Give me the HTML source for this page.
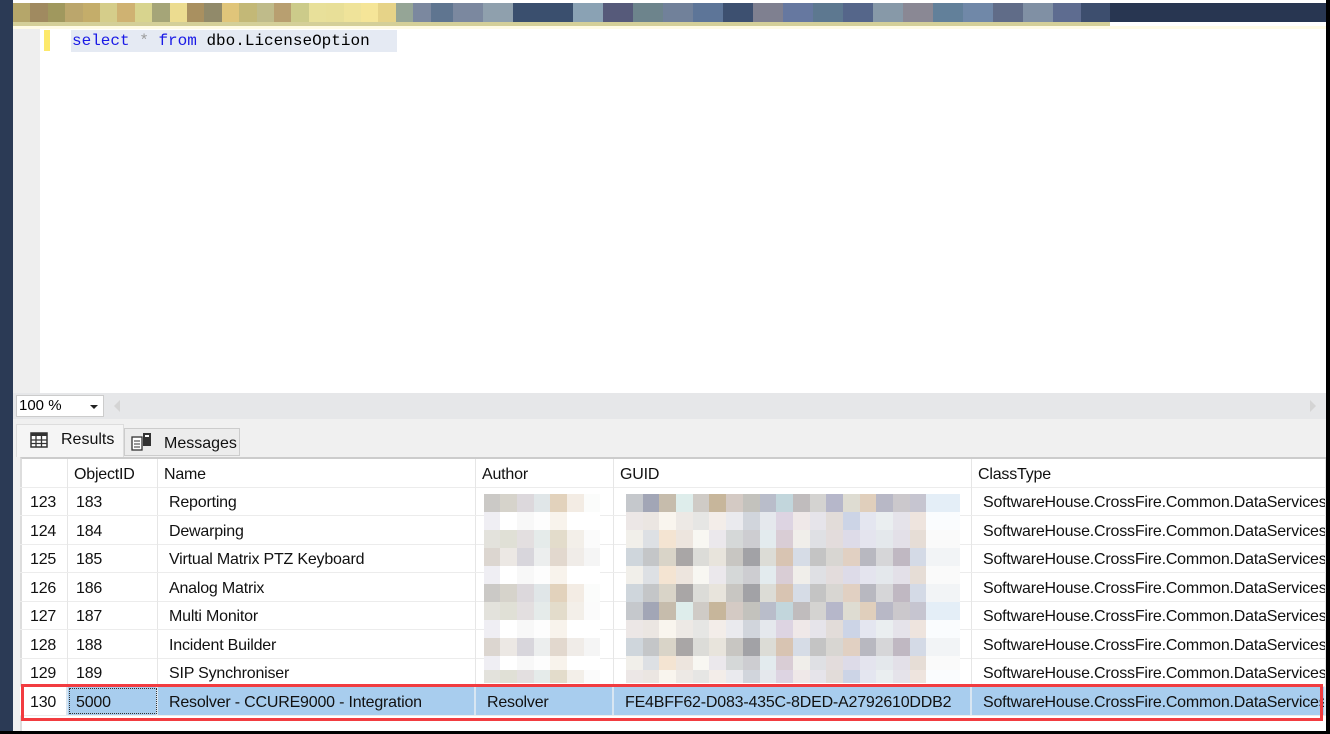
<!DOCTYPE html>
<html><head><meta charset="utf-8"><style>
*{margin:0;padding:0;box-sizing:border-box}
body{width:1330px;height:734px;overflow:hidden;background:#000;position:relative;font-family:"Liberation Sans",sans-serif}
#frame{position:absolute;left:0;top:0;width:1326px;height:731px;background:#fff}
#lbar{position:absolute;left:0;top:0;width:13px;height:731px;background:#2b3a55}
#strip{position:absolute;left:13px;top:3px;width:1313px;height:19px;background:linear-gradient(90deg,#b5a66a 0 17px,#a08a60 17px 35px,#a0985e 35px 52px,#bba66c 52px 70px,#c4ad6a 70px 87px,#d5cd8a 87px 104px,#cfb272 104px 122px,#d8d48e 122px 139px,#a5a578 139px 157px,#ecdc90 157px 174px,#a99060 174px 191px,#918a6a 191px 209px,#e0c57a 209px 226px,#c3b877 226px 244px,#bfbb8a 244px 261px,#b89f70 261px 278px,#cccb8a 278px 296px,#e8e09a 296px 313px,#e8df98 313px 331px,#efe39a 331px 348px,#f5e598 348px 365px,#e6d388 365px 383px,#95a596 383px 400px,#7b889f 400px 418px,#5f7590 418px 440px,#7b889f 440px 470px,#8fa0ad 470px 500px,#3a4f6e 500px 560px,#8aa2b4 560px 590px,#565a7a 590px 620px,#6d848c 620px 650px,#71819a 650px 680px,#5d7598 680px 710px,#3d5070 710px 740px,#7f8090 740px 770px,#6678a0 770px 800px,#5d7890 800px 830px,#55668a 830px 860px,#8799a8 860px 890px,#8a8894 890px 920px,#62809a 920px 950px,#7088a8 950px 980px,#606c88 980px 1010px,#8090a4 1010px 1040px,#5e6c90 1040px 1068px,#3d4e6e 1068px 1097px,#283651 1097px)}
#under{position:absolute;left:13px;top:22px;width:1097px;height:4px;background:#d4cf98}
#under2{position:absolute;left:13px;top:26px;width:1313px;height:3px;background:#fffbe6}
#gut{position:absolute;left:13px;top:29px;width:27px;height:364px;background:#eeeeee}
#ymark{position:absolute;left:44px;top:30px;width:6px;height:21px;background:#fde96b}
#code{position:absolute;left:71px;top:30px;height:22px;padding:0 1px;background:#e5eaf3;font:16px "Liberation Mono",monospace;line-height:22px;color:#000;width:326px}
.kw{color:#1a1ae6}.gr{color:#999}
#zbar{position:absolute;left:13px;top:393px;width:1313px;height:26px;background:#e6e7e9}
#combo{position:absolute;left:16px;top:395px;width:88px;height:22px;background:#fff;border:1px solid #ccc;font-size:15px;line-height:20px;padding-left:2px}
#combo:after{content:"";position:absolute;right:5px;top:9px;border:4px solid transparent;border-top:4px solid #222}
#rarea{position:absolute;left:13px;top:419px;width:1313px;height:312px;background:#f0f0f0}
.tab{position:absolute;font-size:16px;color:#111}
#t1{left:16px;width:108px;background:#f5f5f5;border:1px solid #ddd;border-bottom:none;top:424px;height:33px;line-height:30px;padding-left:44px}
#t2{left:124px;width:116px;background:#ececec;border:1px solid #ccc;top:428px;height:28px;line-height:30px;padding-left:39px}
#grid{position:absolute;left:20px;top:457px;width:1306px;height:274px;background:#fff;border-top:2px solid #ccc;border-left:2px solid #ddd}
.row{position:absolute;left:20px;height:29px;width:1306px;border-bottom:1px solid #ececec;font-size:16px;color:#111}
.c{position:absolute;top:0;height:100%;line-height:31px;border-right:1px solid #e6e6e6;white-space:nowrap;overflow:hidden;padding-left:11px;letter-spacing:-0.2px}
.c0{left:0;width:48px;padding-left:10px}.c1{left:48px;width:90px;padding-left:8px}.c2{left:138px;width:318px}.c3{left:456px;width:138px}.c4{left:594px;width:358px}.c5{left:952px;width:354px}
.hd .c{padding-left:6px}
.sel .c{background:#a8cdee;border-right:2px solid #d8e6f2}
.sel .c0{background:#fff}
.sel .c1{outline:1px dotted #333;outline-offset:-2px}
#red{position:absolute;left:21px;top:684px;width:1302px;height:37px;border:3px solid #f23c40}
.pa{position:absolute;left:484px;width:116px;height:19px}
.pg{position:absolute;left:626px;width:334px;height:19px}
.pA1{background:linear-gradient(90deg,#cbc9c6 0 16px,#d6d3cb 16px 33px,#dcd8dc 33px 50px,#e0e6e8 50px 66px,#e2d2bc 66px 83px,#f3ece4 83px 100px,#fbfcfb 100px)}
.pA2{background:linear-gradient(90deg,#efeef3 0 16px,#fff 16px 33px,#f8f8f8 33px 50px,#fdfdfd 50px 66px,#f8f3ec 66px 83px,#fff 83px)}
.pA3{background:linear-gradient(90deg,#e3e2dc 0 16px,#e0e0d6 16px 33px,#e3dfe0 33px 50px,#e5ebea 50px 66px,#e3dccb 66px 83px,#f3efe9 83px 100px,#fbfbfb 100px)}
.pA4{background:linear-gradient(90deg,#dcd6d0 0 16px,#ece8e4 16px 33px,#d8d6dc 33px 50px,#eceeee 50px 66px,#e2d8ce 66px 83px,#f0ece8 83px 100px,#f5f5f5 100px)}
.pG1{background:linear-gradient(90deg,#c5c8cc 0 17px,#a2a6b6 17px 33px,#c6bcac 33px 50px,#deedeb 50px 67px,#cfcbc6 67px 83px,#c7b69b 83px 100px,#d4cac4 100px 117px,#c3c2bd 117px 134px,#b9bdca 134px 150px,#c2d6dc 150px 167px,#c0bcbd 167px 184px,#d4d3d1 184px 200px,#b6b7ca 200px 217px,#dedcd2 217px 234px,#e0cfbc 234px 250px,#b8b8c6 250px 267px,#cbc8cc 267px 284px,#c6c5d0 284px 300px,#e4eef7 300px)}
.pG2{background:linear-gradient(90deg,#ece7e6 0 17px,#ebe6e2 17px 33px,#f9f5ee 33px 50px,#ede9e5 50px 67px,#e6e6e4 67px 83px,#f3ede9 83px 100px,#eaeaee 100px 117px,#d1d5dc 117px 134px,#e5e8ed 134px 150px,#ddd4e2 150px 167px,#efe8e8 167px 184px,#e6e4ea 184px 200px,#e2dcd9 200px 217px,#ccd4e6 217px 234px,#e4e6f0 234px 250px,#eaeef0 250px 267px,#e5e3ea 267px 284px,#eee4de 284px 300px,#fafcfe 300px)}
.pG3{background:linear-gradient(90deg,#f1efea 0 17px,#dde0e4 17px 33px,#f4e4d2 33px 50px,#ede5de 50px 67px,#f8f7f2 67px 83px,#ebe8ec 83px 100px,#d5d8d8 100px 117px,#cdcdd1 117px 134px,#e3ebee 134px 150px,#d9cdd5 150px 167px,#f0eeea 167px 184px,#dfe0e4 184px 200px,#e3dcdc 200px 217px,#dddbe8 217px 234px,#e4e4ee 234px 250px,#e4e8ec 250px 267px,#e3e0e8 267px 284px,#e6ddd6 284px 300px,#fafafa 300px)}
.pG4{background:linear-gradient(90deg,#cfd6dc 0 17px,#c4c6c8 17px 33px,#d9d4c8 33px 50px,#a9a6a6 50px 67px,#dcdcd8 67px 83px,#e8e4dc 83px 100px,#c8c6c2 100px 117px,#a2a2a6 117px 134px,#dcdcd6 134px 150px,#d8c4b2 150px 167px,#d6dce6 167px 184px,#c4c4c4 184px 200px,#d8d6d2 200px 217px,#e1d0c2 217px 234px,#b8b8c0 234px 250px,#d6d6d8 250px 267px,#c0b8c2 267px 284px,#d4dae6 284px 300px,#f2f4f6 300px)}
</style></head><body>
<div id="frame"></div>
<div id="lbar"></div>
<div id="strip"></div>
<div id="under"></div><div id="under2"></div>
<div id="gut"></div>
<div id="ymark"></div>
<div id="code"><span class="kw">select</span> <span class="gr">*</span> <span class="kw">from</span> dbo.LicenseOption</div>
<div id="zbar"></div>
<div id="combo">100 %</div>
<div style="position:absolute;left:114px;top:400px;border:6px solid transparent;border-right:6px solid #d4d4d4;border-left:none;width:0;height:0"></div>
<div style="position:absolute;left:1310px;top:400px;border:6px solid transparent;border-left:6px solid #d4d4d4;border-right:none;width:0;height:0"></div>
<div id="rarea"></div>
<div class="tab" id="t1">Results</div>
<svg style="position:absolute;left:30px;top:432px" width="18" height="16"><rect x="1" y="1" width="16" height="14" fill="#fff" stroke="#333" stroke-width="1.5"/><rect x="1" y="1" width="16" height="3" fill="#333"/><path d="M6 1V15M11.5 1V15M1 8H17M1 11.5H17" stroke="#333" stroke-width="1.3"/></svg>
<div class="tab" id="t2">Messages</div>
<svg style="position:absolute;left:131px;top:432px" width="22" height="20"><rect x="1" y="5" width="10" height="13" fill="#fff" stroke="#333" stroke-width="1.3"/><path d="M3 9H9M3 12H9M3 15H9" stroke="#333"/><rect x="12" y="1" width="8" height="13" fill="#333"/><rect x="14" y="3" width="4" height="2" fill="#fff"/></svg>
<div id="grid"></div>

<div class="row hd" style="top:459px"><div class="c c0"></div><div class="c c1">ObjectID</div><div class="c c2">Name</div><div class="c c3">Author</div><div class="c c4">GUID</div><div class="c c5">ClassType</div></div>
<div class="row" style="top:487px"><div class="c c0">123</div><div class="c c1">183</div><div class="c c2">Reporting</div><div class="c c3"></div><div class="c c4"></div><div class="c c5">SoftwareHouse.CrossFire.Common.DataServices.LicenseOption</div></div>
<div class="row" style="top:516px"><div class="c c0">124</div><div class="c c1">184</div><div class="c c2">Dewarping</div><div class="c c3"></div><div class="c c4"></div><div class="c c5">SoftwareHouse.CrossFire.Common.DataServices.LicenseOption</div></div>
<div class="row" style="top:544px"><div class="c c0">125</div><div class="c c1">185</div><div class="c c2">Virtual Matrix PTZ Keyboard</div><div class="c c3"></div><div class="c c4"></div><div class="c c5">SoftwareHouse.CrossFire.Common.DataServices.LicenseOption</div></div>
<div class="row" style="top:573px"><div class="c c0">126</div><div class="c c1">186</div><div class="c c2">Analog Matrix</div><div class="c c3"></div><div class="c c4"></div><div class="c c5">SoftwareHouse.CrossFire.Common.DataServices.LicenseOption</div></div>
<div class="row" style="top:601px"><div class="c c0">127</div><div class="c c1">187</div><div class="c c2">Multi Monitor</div><div class="c c3"></div><div class="c c4"></div><div class="c c5">SoftwareHouse.CrossFire.Common.DataServices.LicenseOption</div></div>
<div class="row" style="top:630px"><div class="c c0">128</div><div class="c c1">188</div><div class="c c2">Incident Builder</div><div class="c c3"></div><div class="c c4"></div><div class="c c5">SoftwareHouse.CrossFire.Common.DataServices.LicenseOption</div></div>
<div class="row" style="top:658px"><div class="c c0">129</div><div class="c c1">189</div><div class="c c2">SIP Synchroniser</div><div class="c c3"></div><div class="c c4"></div><div class="c c5">SoftwareHouse.CrossFire.Common.DataServices.LicenseOption</div></div>
<div class="row sel" style="top:687px"><div class="c c0">130</div><div class="c c1">5000</div><div class="c c2">Resolver - CCURE9000 - Integration</div><div class="c c3">Resolver</div><div class="c c4">FE4BFF62-D083-435C-8DED-A2792610DDB2</div><div class="c c5">SoftwareHouse.CrossFire.Common.DataServices.LicenseOption</div></div>

<div class="pa pA1" style="top:494px"></div><div class="pg pG1" style="top:494px"></div>
<div class="pa pA2" style="top:512px"></div><div class="pg pG2" style="top:512px"></div>
<div class="pa pA3" style="top:530px"></div><div class="pg pG3" style="top:530px"></div>
<div class="pa pA4" style="top:548px"></div><div class="pg pG4" style="top:548px"></div>
<div class="pa pA2" style="top:566px"></div><div class="pg pG3" style="top:566px"></div>
<div class="pa pA1" style="top:584px"></div><div class="pg pG4" style="top:584px"></div>
<div class="pa pA3" style="top:602px"></div><div class="pg pG1" style="top:602px"></div>
<div class="pa pA2" style="top:620px"></div><div class="pg pG2" style="top:620px"></div>
<div class="pa pA4" style="top:638px"></div><div class="pg pG4" style="top:638px"></div>
<div class="pa pA2" style="top:656px;height:14px"></div><div class="pg pG3" style="top:656px;height:14px"></div>
<div class="pa pA3" style="top:670px;height:13px"></div><div class="pg pG2" style="top:670px;height:13px"></div>
<div id="red"></div>
</body></html>
